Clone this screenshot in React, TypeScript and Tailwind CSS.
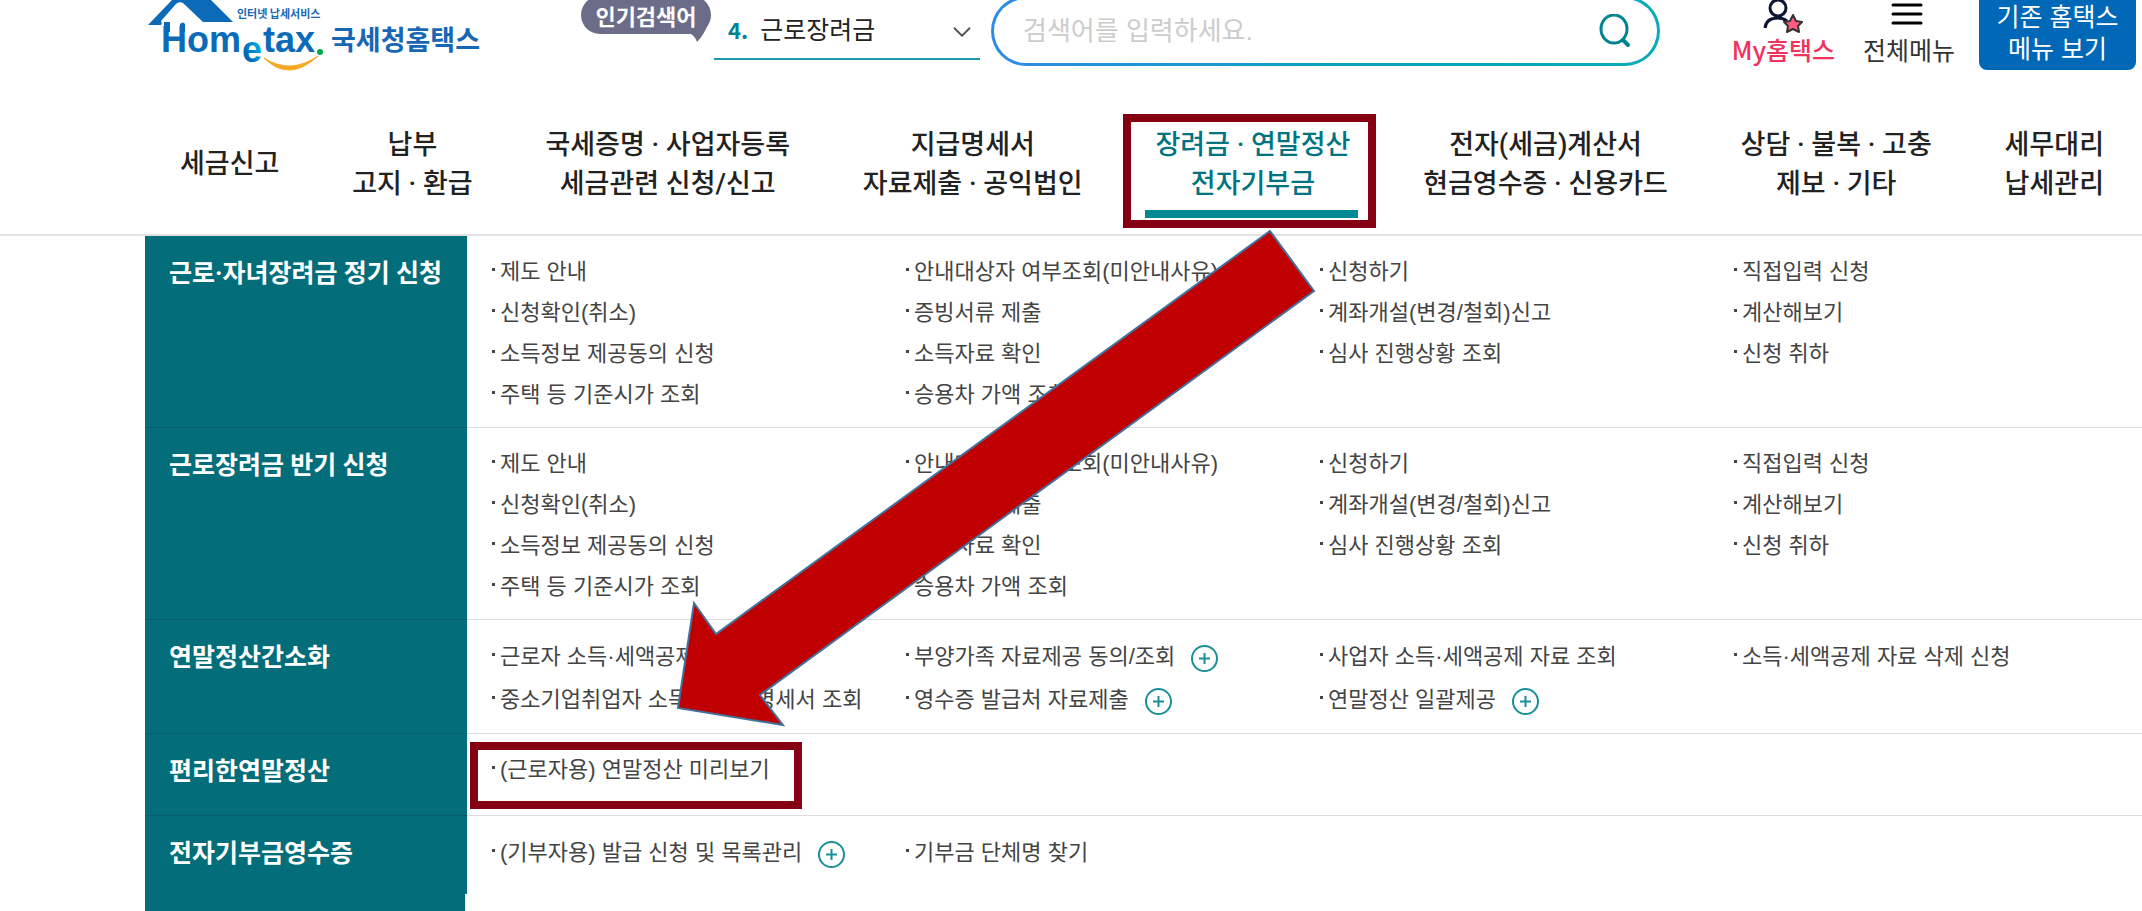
import { ChevronDown } from "lucide-react";

type MenuItem = { label: string; plus?: boolean; marked?: boolean };
type MenuGroup = { title: string; columns: MenuItem[][] };

const NAV_ITEMS: { lines: string[]; active?: boolean }[] = [
  { lines: ["세금신고"] },
  { lines: ["납부", "고지 · 환급"] },
  { lines: ["국세증명 · 사업자등록", "세금관련 신청/신고"] },
  { lines: ["지급명세서", "자료제출 · 공익법인"] },
  { lines: ["장려금 · 연말정산", "전자기부금"], active: true },
  { lines: ["전자(세금)계산서", "현금영수증 · 신용카드"] },
  { lines: ["상담 · 불복 · 고충", "제보 · 기타"] },
  { lines: ["세무대리", "납세관리"] },
];

const SUBSIDY_COLUMNS: MenuItem[][] = [
  [
    { label: "제도 안내" },
    { label: "신청확인(취소)" },
    { label: "소득정보 제공동의 신청" },
    { label: "주택 등 기준시가 조회" },
  ],
  [
    { label: "안내대상자 여부조회(미안내사유)" },
    { label: "증빙서류 제출" },
    { label: "소득자료 확인" },
    { label: "승용차 가액 조회" },
  ],
  [{ label: "신청하기" }, { label: "계좌개설(변경/철회)신고" }, { label: "심사 진행상황 조회" }],
  [{ label: "직접입력 신청" }, { label: "계산해보기" }, { label: "신청 취하" }],
];

const GROUPS: MenuGroup[] = [
  { title: "근로·자녀장려금 정기 신청", columns: SUBSIDY_COLUMNS },
  { title: "근로장려금 반기 신청", columns: SUBSIDY_COLUMNS },
  {
    title: "연말정산간소화",
    columns: [
      [{ label: "근로자 소득·세액공제 자료 조회" }, { label: "중소기업취업자 소득세 감면명세서 조회" }],
      [
        { label: "부양가족 자료제공 동의/조회", plus: true },
        { label: "영수증 발급처 자료제출", plus: true },
      ],
      [{ label: "사업자 소득·세액공제 자료 조회" }, { label: "연말정산 일괄제공", plus: true }],
      [{ label: "소득·세액공제 자료 삭제 신청" }],
    ],
  },
  { title: "편리한연말정산", columns: [[{ label: "(근로자용) 연말정산 미리보기", marked: true }]] },
  {
    title: "전자기부금영수증",
    columns: [[{ label: "(기부자용) 발급 신청 및 목록관리", plus: true }], [{ label: "기부금 단체명 찾기" }]],
  },
];

function Logo() {
  return (
    <a href="#home" aria-label="국세청홈택스" className="shrink-0">
      <svg width="336" height="76" viewBox="145 0 336 76">
        <defs>
          <linearGradient id="logo-e" x1="0" y1="1" x2="1" y2="0">
            <stop offset="0.3" stopColor="#0068b7" />
            <stop offset="0.8" stopColor="#00b4ef" />
          </linearGradient>
        </defs>
        <path d="M148 25 L172 0 H211 L233 22 H203 L183 3 Q179 1 176 4 L161 21 Q163 25 160 25 Z" fill="#0b6bb8" />
        <g fill="#0b6bb8" fontFamily="'Liberation Sans', sans-serif" fontWeight="700" fontSize="36">
          <text x="161" y="52">H</text>
          <text x="187" y="52">om</text>
          <text x="263" y="52">tax</text>
          <text x="242" y="62" fill="url(#logo-e)">e</text>
        </g>
        {/* joins the roof to the H */}
        <path d="M164 22 H170 V32 H164 Z M180 24 Q183 21 185 24 V32 H180 Z" fill="#0b6bb8" />
        <circle cx="320" cy="52" r="3" fill="#00a94f" />
        <path d="M264 58 Q289 83 318 56 Q290 75 264 58 Z" fill="#f7a823" stroke="#f7a823" />
        <g fill="#1767b5" fontFamily="'Noto Sans CJK KR', sans-serif" fontWeight="700">
          <text x="237" y="18" fontSize="11">인터넷 납세서비스</text>
          <text x="331" y="50" fontSize="27">국세청홈택스</text>
        </g>
      </svg>
    </a>
  );
}

function Header() {
  return (
    <header className="flex h-[91px] items-start pl-[145px] pr-[6px]">
      <Logo />

      <div className="relative ml-[100px] -mt-1 flex h-[38px] w-[130px] shrink-0 items-center justify-center rounded-full bg-[#6b6d88] text-[22px] font-bold text-white">
        인기검색어
        <svg className="absolute right-0 bottom-[-8px]" width="24" height="22" viewBox="0 0 24 22" aria-hidden>
          <path d="M0 12 Q8 15 10 22 Q17 15 21 4 Z" fill="#6b6d88" />
        </svg>
      </div>

      <div className="relative ml-[3px] flex h-[60px] w-[266px] shrink-0 items-center border-b-2 border-[#1a9ba5] pl-[14px]">
        <label htmlFor="popular" className="text-[22px] font-bold text-[#008590]">
          4.
        </label>
        <select
          id="popular"
          className="ml-[12px] h-[60px] flex-1 cursor-pointer appearance-none bg-transparent text-[25px] text-[#222] outline-none"
        >
          <option>근로장려금</option>
        </select>
        <ChevronDown className="pointer-events-none absolute right-[3px] top-[17px] size-[30px] text-[#555]" strokeWidth={1.5} aria-hidden />
      </div>

      <form className="ml-[11px] -mt-1 h-[70px] flex-1 rounded-full bg-linear-to-r from-[#2e8be6] via-[#0a9fc0] to-[#0aabb8] p-[3px]">
        <div className="flex h-full items-center rounded-full bg-white pl-[29px] pr-[26px]">
          <input
            type="text"
            aria-label="검색어"
            placeholder="검색어를 입력하세요."
            className="min-w-0 flex-1 font-['Liberation_Sans','Noto_Sans_CJK_KR',sans-serif] text-[26px] text-[#222] outline-none placeholder:text-[#ccc]"
          />
          <button type="button" aria-label="검색">
            <svg width="32" height="34" viewBox="0 0 32 34" fill="none" stroke="#008590" strokeWidth="3" strokeLinecap="round">
              <ellipse cx="15" cy="15" rx="13" ry="14" />
              <path d="M24 26 L29 31" strokeWidth="4" />
            </svg>
          </button>
        </div>
      </form>

      <a href="#my" className="ml-[72px] flex shrink-0 flex-col items-center text-[25px] leading-8 font-medium text-[#f0325c]">
        <svg width="44" height="33" viewBox="0 0 44 33" fill="none" aria-hidden>
          <circle cx="17" cy="8" r="8" stroke="#0b1433" strokeWidth="3" />
          <path d="M4 28 Q5 18 17 18 Q22 18 26 21" stroke="#0b1433" strokeWidth="3" />
          <path
            d="M32 15 L35 21 L41 22 L37 26 L38 32 L32 29 L26 32 L27 26 L23 22 L29 21 Z"
            fill="#ff5c7f"
            stroke="#333"
            strokeWidth="2"
            strokeLinejoin="round"
          />
        </svg>
        My홈택스
      </a>

      <button type="button" className="ml-7 flex shrink-0 flex-col items-center text-[25px] leading-8 text-[#333]">
        <svg width="38" height="33" viewBox="0 0 38 33" stroke="#000" strokeWidth="3" strokeLinecap="round" aria-hidden>
          <path d="M3 5 H31 M3 14 H31 M3 23 H31" />
        </svg>
        전체메뉴
      </button>

      <button
        type="button"
        className="ml-6 -mt-1 h-[74px] w-[157px] shrink-0 rounded-b-lg bg-[#0068b7] font-['Liberation_Sans','Noto_Sans_CJK_KR',sans-serif] text-[25px] leading-8 text-white"
      >
        기존 홈택스
        <br />
        메뉴 보기
      </button>
    </header>
  );
}

function MainNav() {
  return (
    <nav className="flex h-[145px] items-center justify-between border-b-2 border-[#e2e2e2] pt-1 pr-[38px] pl-[180px] font-['Roboto','Noto_Sans_CJK_KR',sans-serif]">
      {NAV_ITEMS.map(({ lines, active }) => (
        <a
          key={lines[0]}
          href="#menu"
          className={`relative shrink-0 text-center text-[27px] leading-[39px] font-medium ${active ? "text-[#007481]" : "text-[#222]"}`}
        >
          {lines.map((line) => (
            <span key={line} className="block">
              {line}
            </span>
          ))}
          {active && (
            <>
              <span className="absolute -right-2 -bottom-[14px] -left-[10px] h-2 bg-[#008994]" />
              <span className="absolute -top-3 -right-[26px] -bottom-6 -left-8 border-8 border-[#850012]" />
            </>
          )}
        </a>
      ))}
    </nav>
  );
}

function PlusBadge() {
  return (
    <button type="button" aria-label="하위 메뉴 열기" className="ml-4 mt-1">
      <svg width="27" height="27" viewBox="0 0 27 27" fill="none" stroke="#1a8f99" strokeWidth="2">
        <circle cx="13.5" cy="13.5" r="12.5" />
        <path d="M8 13.5 H19 M13.5 8 V19" />
      </svg>
    </button>
  );
}

function MenuRow({ title, columns }: MenuGroup) {
  const hasPlus = columns.some((column) => column.some((item) => item.plus));
  return (
    <section className="flex min-h-[82px] last:min-h-[78px]">
      <h2 className="w-[322px] shrink-0 border-b border-[#055e6a] bg-[#036d7a] pt-4 pl-6 font-['Roboto','Noto_Sans_CJK_KR',sans-serif] text-[25px] leading-[44px] font-bold text-white">
        {title}
      </h2>
      <div className="grid flex-1 grid-cols-[1fr_1fr_1fr_408px] border-b border-[#dedede] pt-[15px] pb-3 pl-[25px] font-['Liberation_Sans','Noto_Sans_CJK_KR',sans-serif]">
        {columns.map((column, i) => (
          <ul key={i}>
            {column.map((item) => (
              <li key={item.label} className={`flex items-center whitespace-nowrap ${hasPlus ? "h-[43px]" : "h-[41px]"}`}>
                <a
                  href="#menu"
                  className="relative flex items-center text-[22px] text-[#444] before:mr-[5px] before:mb-1 before:size-[3px] before:bg-[#444]"
                >
                  {item.label}
                  {item.marked && (
                    <span className="absolute -top-[11px] -right-8 -bottom-[23px] -left-[22px] border-8 border-[#850012]" />
                  )}
                </a>
                {item.plus && <PlusBadge />}
              </li>
            ))}
          </ul>
        ))}
      </div>
    </section>
  );
}

export default function App() {
  return (
    <div className="relative flex min-h-screen flex-col overflow-hidden bg-white font-['Noto_Sans_CJK_KR',sans-serif]">
      <Header />
      <MainNav />
      <main className="flex flex-1 flex-col pl-[145px]">
        <div className="[&>section:last-child>*]:border-b-0">
          {GROUPS.map((group) => (
            <MenuRow key={group.title} {...group} />
          ))}
        </div>
        <div className="w-80 flex-1 bg-[#036d7a]" />
      </main>

      {/* arrow from the active tab down to the highlighted menu */}
      <svg className="pointer-events-none absolute top-[230px] left-[676px]" width="640" height="498" viewBox="676 230 640 498" aria-hidden>
        <path
          d="M1270 231 L1314 291 L760 695 L783 725 L678 708 L694 603 L716 634 Z"
          fill="#c00000"
          stroke="#41719c"
          strokeWidth="2"
        />
      </svg>
    </div>
  );
}
